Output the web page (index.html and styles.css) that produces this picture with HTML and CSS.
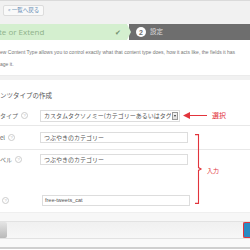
FILE: index.html
```html
<!doctype html>
<html lang="ja">
<head>
  <meta charset="utf-8">
  <title>カスタムタクソノミーの作成</title>
  <link rel="stylesheet" href="styles.css">
</head>
<body>
  <div class="topbar">
    <a class="back-btn" href="#">« 一覧へ戻る</a>
  </div>
  <div class="steps">
    <div class="step step-done">
      <span class="step-label">te or Extend</span>
      <span class="step-check">✔</span>
    </div>
    <div class="step step-current">
      <span class="step-num">2</span>
      <span class="step-label">設定</span>
    </div>
  </div>
  <div class="content">
    <div class="desc">
      <span class="desc-line">ew Content Type allows you to control exactly what that content type does, how it acts like, the fields it has</span>
      <span class="desc-line desc-last">age it.</span>
    </div>
    <div class="band"></div>
    <h2 class="section-title">ンツタイプの作成</h2>
    <div class="form">
      <div class="row row-select">
        <span class="label">タイプ <i class="help">?</i></span>
        <div class="select"><span class="select-text">カスタムタクソノミー(カテゴリーあるいはタグ</span><span class="select-arrow"></span></div>
        <div class="note-select">
          <svg class="arrow" viewBox="0 0 24 7" aria-hidden="true"><path d="M24 2.9H7V0L0 3.5 7 7V4.1h17z"/></svg>
          <span class="note">選択</span>
        </div>
      </div>
      <div class="row row-first">
        <span class="label">el <i class="help">?</i></span>
        <div class="input">つぶやきのカテゴリー</div>
      </div>
      <div class="row row-second">
        <span class="label">ベル <i class="help">?</i></span>
        <div class="input">つぶやきのカテゴリー</div>
      </div>
      <div class="row row-tall">
        <span class="label"><i class="help">?</i></span>
        <div class="input input-latin">free-tweets_cat</div>
      </div>
      <div class="bracket">
        <svg viewBox="0 0 8 70" aria-hidden="true"><path d="M0 .6h3.5v33l2.5 1.4-2.5 1.4v33H0"/></svg>
        <span class="note note-small">入力</span>
      </div>
    </div>
    <div class="footer-space"></div>
    <div class="footer">
      <span class="btn-gray"></span>
      <span class="btn-blue"></span>
    </div>
    <div class="bottom-space"></div>
  </div>
</body>
</html>
```

FILE: styles.css
```css
:root {
  --top-bg: #f1f1f1;
  --green: #d4efcf;
  --green-text: #8fb28a;
  --dark: #6e6e6e;
  --red: #e2343c;
  --line: #e8e8e8;
  --text: #666;
}

body {
  margin: 0;
  background: #fff;
  color: var(--text);
  font: 6px/1.2 "Noto Sans CJK JP", "Noto Sans", sans-serif;
  overflow: hidden;
}

.topbar {
  background: var(--top-bg);
  border-top: 1px solid #dadada;
  height: 24px;
  padding: 4px 0 0 3px;
  box-sizing: border-box;
}

.back-btn {
  display: inline-block;
  background: #f9f9f9;
  border: 1px solid #dcdcdc;
  border-radius: 2px;
  color: #5a86b0;
  font-size: 5.5px;
  line-height: 9px;
  padding: 0 4px;
  text-decoration: none;
}

.steps {
  display: flex;
  height: 16px;
}

.step {
  display: flex;
  align-items: center;
}

.step-done {
  background: var(--green);
  color: var(--green-text);
  width: 127px;
  position: relative;
  font: 8px/1 "Open Sans", "Liberation Sans", sans-serif;
}

.step-done::after {
  content: "";
  position: absolute;
  right: -4px;
  top: 0;
  border-left: 4px solid var(--green);
  border-top: 8px solid transparent;
  border-bottom: 8px solid transparent;
  z-index: 1;
}

.step-done .step-label {
  margin-left: -1px;
}

.step-check {
  margin-left: auto;
  margin-right: 6px;
  font-size: 7px;
  color: #72906d;
}

.step-current {
  flex: 1;
  background: var(--dark);
  color: #dcdcdc;
  padding-left: 7px;
  gap: 4px;
  border-left: 2px solid #fff;
}

.step-num {
  display: inline-flex;
  align-items: center;
  justify-content: center;
  width: 10px;
  height: 10px;
  border-radius: 50%;
  background: #fff;
  color: var(--dark);
  font: bold 7px/1 "Liberation Sans", sans-serif;
}

.step-current .step-label {
  font-size: 6.5px;
}

.desc {
  height: 35px;
  box-sizing: border-box;
  padding-top: 9px;
  font: 5px/6px "Liberation Sans", sans-serif;
  color: #777;
  white-space: nowrap;
}

.desc-line {
  display: block;
}

.desc-last {
  margin-top: 6px;
}

.band {
  background: #f1f1f1;
  height: 5px;
  box-sizing: border-box;
  border-top: 1px solid #ebebeb;
}

.section-title {
  margin: 0;
  height: 26px;
  box-sizing: border-box;
  padding-top: 10px;
  line-height: 10px;
  font-weight: normal;
  font-size: 6.5px;
  color: #555;
}

.form {
  position: relative;
}

.row {
  display: flex;
  align-items: center;
  box-sizing: border-box;
}

.row-select {
  height: 20px;
  border-bottom: 1px solid var(--line);
}

.row-first {
  height: 24px;
  border-bottom: 1px solid var(--line);
}

.row-second {
  height: 19px;
}

.row-tall {
  height: 43px;
  align-items: flex-end;
  padding-bottom: 6px;
}

.label {
  width: 40px;
  font-size: 6px;
  color: #666;
  display: flex;
  align-items: center;
  gap: 3px;
}

.help {
  display: inline-block;
  width: 5px;
  height: 5px;
  border: 1px solid #ccc;
  border-radius: 50%;
  font: normal 4px/5px "Liberation Sans", sans-serif;
  text-align: center;
  color: #bbb;
}

.row-tall .label {
  padding-left: 2px;
  padding-bottom: 2px;
}

.select,
.input {
  box-sizing: border-box;
  border: 1px solid #ddd;
  background: #fff;
  height: 11px;
  line-height: 9px;
  font-size: 6px;
  color: #555;
  padding-left: 3px;
}

.select {
  width: 140px;
  height: 12px;
  line-height: 10px;
  display: flex;
  white-space: nowrap;
  overflow: hidden;
}

.select-text {
  overflow: hidden;
  flex: 1;
}

.select-arrow {
  flex: none;
  width: 6px;
  height: 8px;
  margin: 1px 1px 0 1px;
  border: 1px solid #999;
  box-sizing: border-box;
  background: linear-gradient(#f4f4f4, #ddd);
  position: relative;
}

.select-arrow::after {
  content: "";
  position: absolute;
  left: 0.5px;
  top: 2px;
  border-top: 2px solid #333;
  border-left: 1.5px solid transparent;
  border-right: 1.5px solid transparent;
}

.input {
  width: 148px;
}

.input-latin {
  font-family: "Liberation Sans", sans-serif;
  font-size: 5.5px;
  padding-left: 2px;
}

.note-select {
  display: flex;
  align-items: center;
  margin-left: 3px;
  gap: 5px;
}

.arrow {
  width: 24px;
  height: 7px;
  fill: var(--red);
}

.note {
  color: var(--red);
  font-size: 7px;
}

.note-small {
  font-size: 6px;
  margin-left: 4px;
  padding-top: 4px;
}

.bracket {
  position: absolute;
  left: 195px;
  top: 28px;
  display: flex;
  align-items: center;
}

.bracket svg {
  width: 8px;
  height: 70px;
  fill: none;
  stroke: var(--red);
  stroke-width: 1.1;
}

.footer-space {
  height: 9px;
  background: #f7f7f7;
  border-top: 1px solid #efefef;
  box-sizing: border-box;
}

.footer {
  display: flex;
  justify-content: space-between;
  height: 18px;
  box-sizing: border-box;
  background: linear-gradient(#f0f0f0, #f7f7f7);
  border-top: 1px solid #e2e2e2;
  border-bottom: 1px solid #e2e2e2;
}

.btn-gray {
  width: 7px;
  background: linear-gradient(#e4e4e4, #b9b9b9);
  border-radius: 0 2px 2px 0;
}

.btn-blue {
  width: 6px;
  background: #2a8ac3;
  border: 1px solid var(--red);
  border-right: 0;
  border-radius: 2px 0 0 2px;
}

.bottom-space {
  height: 8px;
  background: #f9f9f9;
  border-bottom: 2px solid #cfcfcf;
}
```
